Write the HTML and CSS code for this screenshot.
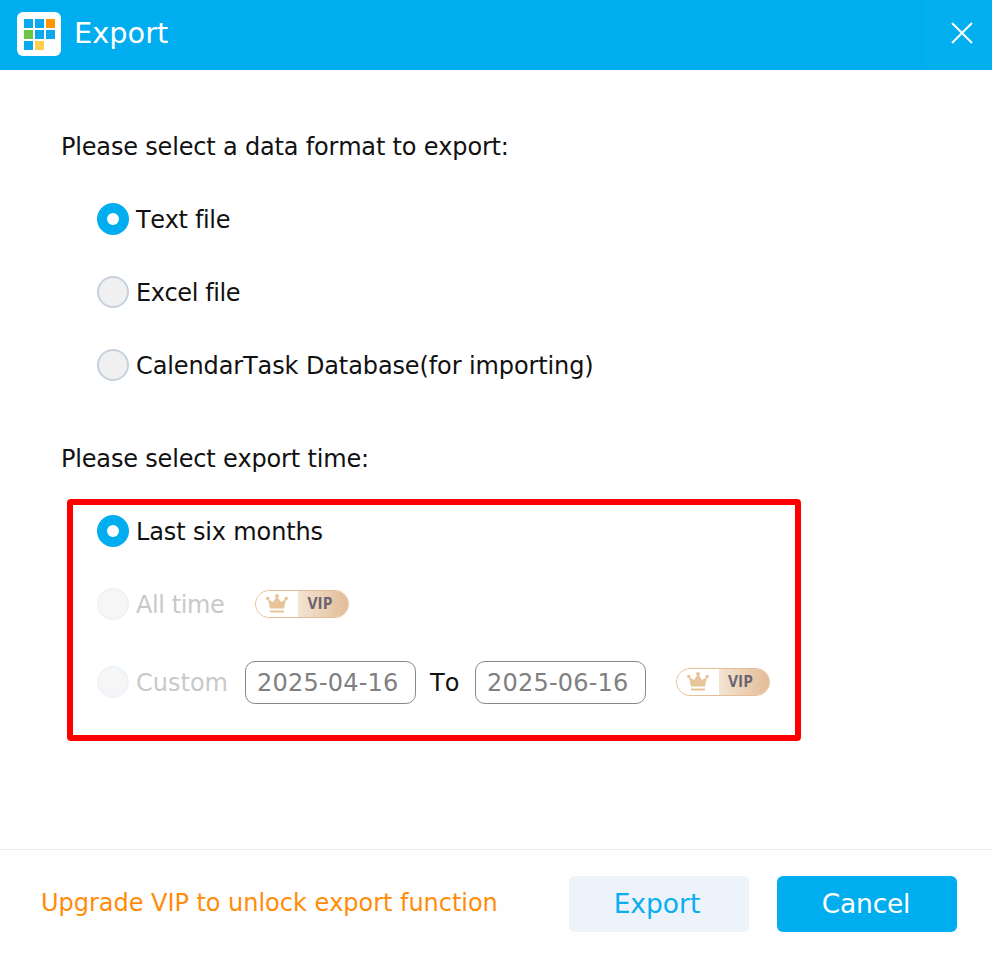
FILE: index.html
```html
<!DOCTYPE html>
<html lang="en">
<head>
<meta charset="utf-8">
<title>Export</title>
<link rel="stylesheet" href="styles.css">
</head>
<body>
<div class="dialog">
  <header class="titlebar">
    <div class="logo">
      <div class="logo-grid">
        <i class="b"></i><i class="b"></i><i class="o"></i>
        <i class="g"></i><i class="b"></i><i class="b"></i>
        <i class="b"></i><i class="y"></i>
      </div>
    </div>
    <h1 class="title">Export</h1>
    <button class="close" aria-label="Close">
      <svg width="22" height="22" viewBox="0 0 22 22"><path d="M1 1L21 21M21 1L1 21" stroke="#fff" stroke-width="2" fill="none"/></svg>
    </button>
  </header>
  <main class="content">
    <p class="heading">Please select a data format to export:</p>
    <div class="option"><span class="radio on"></span><span class="label text-file">Text file</span></div>
    <div class="option"><span class="radio"></span><span class="label excel">Excel file</span></div>
    <div class="option"><span class="radio"></span><span class="label long">CalendarTask Database(for importing)</span></div>
    <p class="heading second">Please select export time:</p>
    <div class="option"><span class="radio on"></span><span class="label months">Last six months</span></div>
    <div class="option disabled">
      <span class="radio"></span><span class="label excel">All time</span>
      <span class="vip">
        <span class="vip-crown"><svg width="22" height="20" viewBox="0 0 22 20"><path d="M11 2L15 8L20 5L18 14.500H4L2 5L7 8Z" fill="#e8c49a"/><circle cx="11" cy="2" r="2" fill="#e8c49a"/><circle cx="1.800" cy="4.500" r="1.800" fill="#e8c49a"/><circle cx="20.200" cy="4.500" r="1.800" fill="#e8c49a"/><rect x="4" y="16.500" width="14" height="2" fill="#e8c49a"/></svg></span>
        <span class="vip-label">VIP</span>
      </span>
    </div>
    <div class="option custom disabled">
      <span class="radio"></span><span class="label custom-label">Custom</span>
      <span class="date">2025-04-16</span>
      <span class="label to">To</span>
      <span class="date">2025-06-16</span>
      <span class="vip">
        <span class="vip-crown"><svg width="22" height="20" viewBox="0 0 22 20"><path d="M11 2L15 8L20 5L18 14.500H4L2 5L7 8Z" fill="#e8c49a"/><circle cx="11" cy="2" r="2" fill="#e8c49a"/><circle cx="1.800" cy="4.500" r="1.800" fill="#e8c49a"/><circle cx="20.200" cy="4.500" r="1.800" fill="#e8c49a"/><rect x="4" y="16.500" width="14" height="2" fill="#e8c49a"/></svg></span>
        <span class="vip-label">VIP</span>
      </span>
    </div>
    <div class="highlight"></div>
  </main>
  <footer class="footer">
    <span class="upgrade">Upgrade VIP to unlock export function</span>
    <button class="btn light">Export</button>
    <button class="btn primary">Cancel</button>
  </footer>
</div>
</body>
</html>
```
FILE: styles.css
```css
* { box-sizing: border-box; }
html, body { margin: 0; padding: 0; background: #fff; }
body { font-family: "DejaVu Sans", sans-serif; color: #111; font-size: 24px; font-kerning: none; }
.dialog { width: 992px; height: 953px; display: flex; flex-direction: column; overflow: hidden; }
.titlebar { height: 70px; background: #00aeef; display: flex; align-items: flex-start; padding: 12px 0 0 17px; color: #fff; }
.logo { width: 44px; height: 44px; background: #fff; border-radius: 6px; padding: 7px; }
.logo-grid { display: grid; grid-template-columns: repeat(3, 9px); grid-auto-rows: 9px; gap: 2px; }
.logo-grid .b { background: #0aa9ee; }
.logo-grid .o { background: #ff9500; }
.logo-grid .g { background: #6cc644; }
.logo-grid .y { background: #ffd04d; }
.title { margin: 0 0 0 13px; font-size: 28.8px; line-height: 42px; font-weight: 400; flex: 1; }
.close { width: 66px; height: 70px; margin-top: -12px; border: 0; padding: 0 0 5px 5px; background: #04aff0; display: flex; align-items: center; justify-content: center; }
.content { position: relative; flex: 1; padding: 40px 0 0 61px; }
.heading { margin: 0; height: 72px; line-height: 74px; font-size: 24px; letter-spacing: -0.18px; }
.second { margin-top: 21px; }
.option { height: 73px; display: flex; align-items: center; padding-left: 36px; }
.label { padding-top: 2px; }
.text-file { letter-spacing: -0.35px; }
.excel { letter-spacing: -0.4px; }
.long { letter-spacing: -0.11px; }
.months { letter-spacing: -0.14px; }
.radio { width: 32px; height: 32px; border-radius: 50%; background: #f0f0f0; border: 2px solid #c6d1dd; margin-right: 7px; flex: none; }
.radio.on { background: #fff; border: 10px solid #00aeef; }
.disabled { color: #c9c9c9; }
.disabled .radio { background: #f6f6f6; border-color: #ecf3fb; }
.custom { height: 83px; padding-top: 1px; }
.custom-label { width: 109px; flex: none; }
.date { width: 171px; height: 43px; border: 1px solid #888; border-radius: 10px; color: #808080; padding-left: 11px; line-height: 43px; letter-spacing: 0.2px; flex: none; }
.to { color: #111; width: 59px; padding-left: 14px; flex: none; }
.vip { display: flex; width: 94px; height: 28px; margin-left: 30px; border-radius: 14px; overflow: hidden; flex: none; border: 1.5px solid #e5bd98; }
.excel + .vip { margin-left: 31px; }
.vip-crown { width: 42px; background: #fff; display: flex; align-items: center; justify-content: center; border-radius: 14px 0 0 14px; }
.vip-label { flex: 1; background: linear-gradient(90deg, #f3e4d3, #e3bc97); color: #6a6470; font-size: 15.5px; font-weight: 700; font-family: "Open Sans", sans-serif; padding-right: 7px; text-align: center; line-height: 25px; }
.highlight { position: absolute; left: 67px; top: 429px; width: 734px; height: 242px; border: 6px solid #f00; border-radius: 4px; pointer-events: none; }
.footer { height: 104px; border-top: 1px solid #ececf2; display: flex; align-items: flex-start; padding: 26px 35px 0 41px; background: #fefefe; }
.upgrade { color: #ff8c0a; flex: 1; height: 56px; line-height: 54px; letter-spacing: -0.03px; }
.btn { width: 180px; height: 56px; border: 0; border-radius: 6px; padding: 0 0 2px; font: inherit; font-size: 26.500px; }
.light { background: #edf3fb; color: #0aaef0; margin-right: 28px; padding-right: 4px; }
.primary { background: #00aeef; color: #fff; letter-spacing: -0.2px; padding-right: 2px; }
```
